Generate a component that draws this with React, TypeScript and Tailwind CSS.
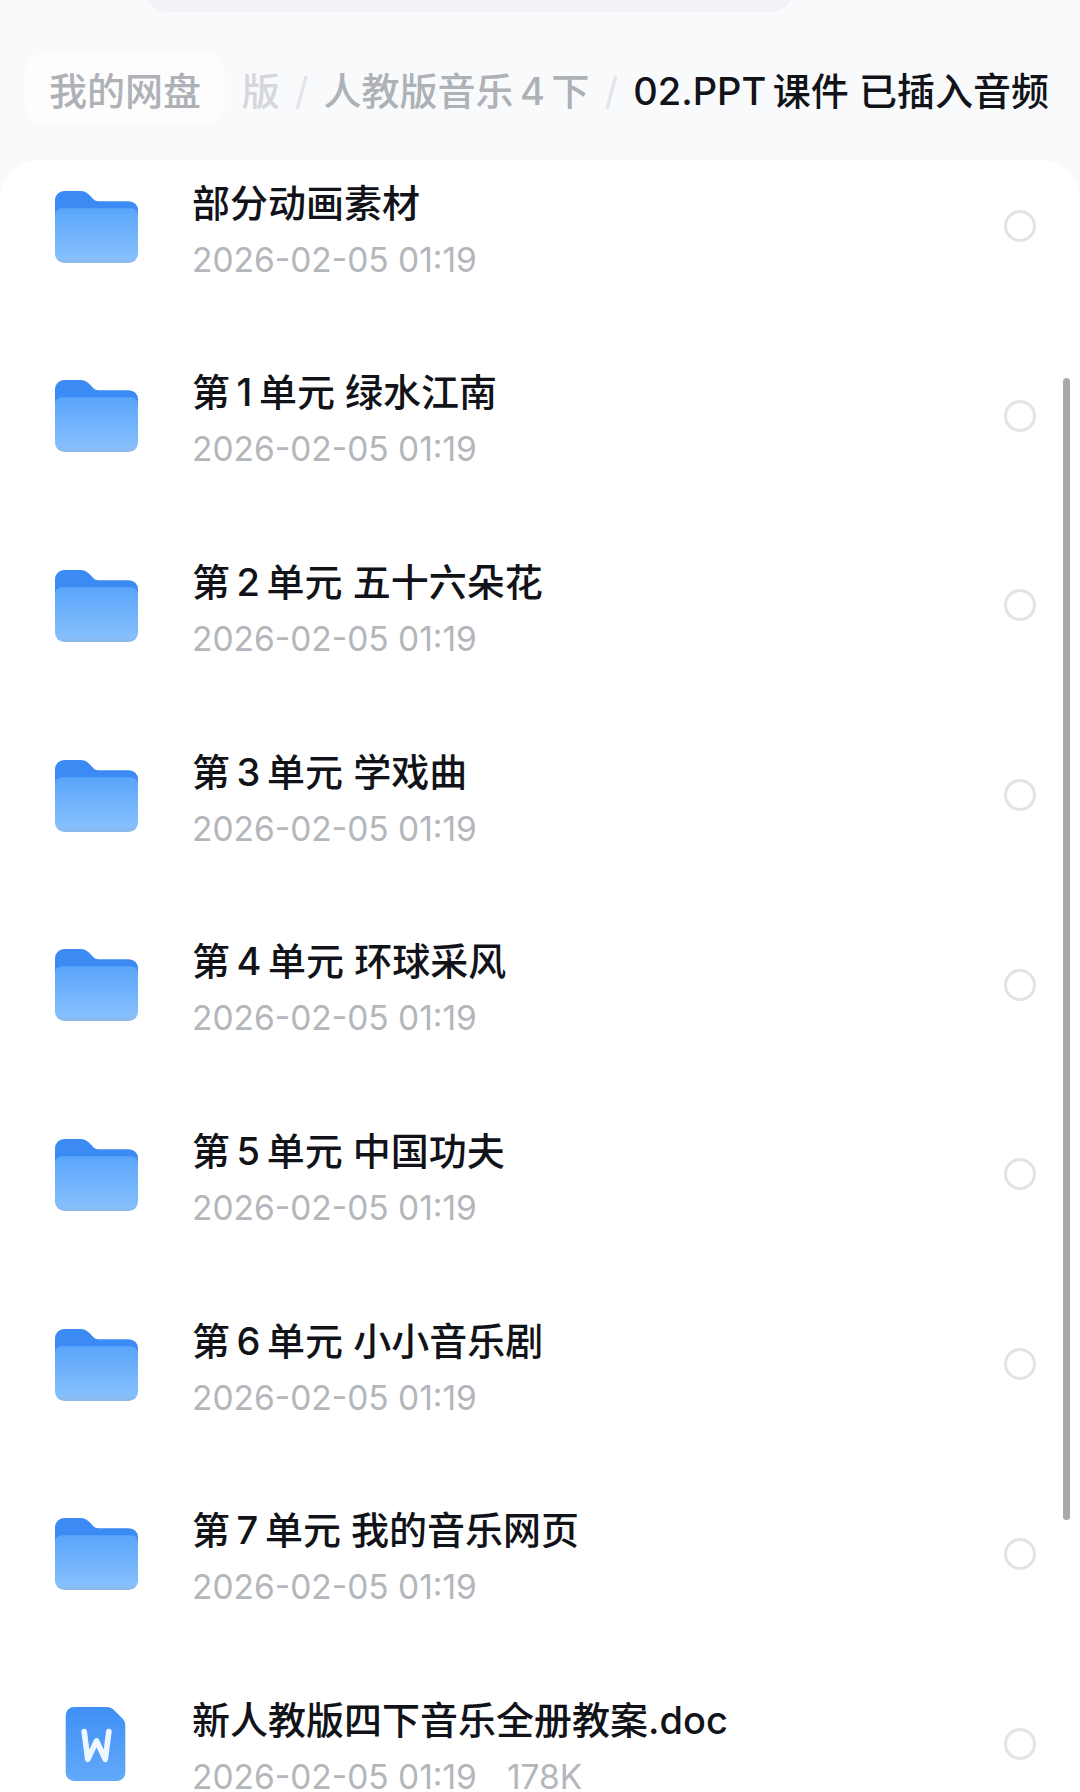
const FONT = "font-['Inter','Noto_Sans_CJK_SC',sans-serif]";

const folders = [
  '部分动画素材',
  '第\u20091\u2009单元 绿水江南',
  '第\u20092\u2009单元 五十六朵花',
  '第\u20093\u2009单元 学戏曲',
  '第\u20094\u2009单元 环球采风',
  '第\u20095\u2009单元 中国功夫',
  '第\u20096\u2009单元 小小音乐剧',
  '第\u20097\u2009单元 我的音乐网页',
];

function FolderIcon() {
  return (
    <svg width="83" height="73" viewBox="0 0 82 72" className="shrink-0">
      <defs>
        <linearGradient id="folderFront" x1="0" y1="0" x2="0" y2="1">
          <stop offset="0" stopColor="#5aa5fb" />
          <stop offset="0.9" stopColor="#85bffd" />
          <stop offset="1" stopColor="#8db9e8" />
        </linearGradient>
      </defs>
      <path
        d="M0 10a9 9 0 0 1 9-9h16c4 0 6 1 9 4l4 4c2 2 4 2 7 2h28a9 9 0 0 1 9 9v20H0z"
        fill="#3c8af4"
      />
      <path
        d="M0 25c0-4 3-7 7-7h68c4 0 7 3 7 7v38a9 9 0 0 1-9 9H9a9 9 0 0 1-9-9z"
        fill="url(#folderFront)"
      />
    </svg>
  );
}

function DocIcon() {
  return (
    <svg width="61" height="74" viewBox="0 0 58 72" className="shrink-0">
      <defs>
        <linearGradient id="docFill" x1="0" y1="0" x2="0" y2="1">
          <stop offset="0" stopColor="#3f8ff5" />
          <stop offset="1" stopColor="#62a9fa" />
        </linearGradient>
      </defs>
      <path
        d="M8 0h32c3 0 5 1 7 3l8 8c2 2 3 4 3 7v46a8 8 0 0 1-8 8H8a8 8 0 0 1-8-8V8a8 8 0 0 1 8-8z"
        fill="url(#docFill)"
      />
      <path
        d="M18 24l3.500 27 8.500-18 8.500 18 3.500-27"
        fill="none"
        stroke="#eef6ff"
        strokeWidth="5.500"
        strokeLinecap="round"
        strokeLinejoin="round"
      />
    </svg>
  );
}

function Radio() {
  return <div className="w-[32px] h-[32px] shrink-0 rounded-full border-[3px] border-[#e2e3e5]" />;
}

function Row({ icon, name, meta }: { icon: React.ReactNode; name: string; meta: React.ReactNode }) {
  return (
    <div className="h-[100px] flex items-center pl-[55px] pr-[44px]">
      <div className="w-[137px] shrink-0">{icon}</div>
      <div className="flex-1 min-w-0 translate-y-[4px]">
        <div className="text-[38px] leading-[48px] font-medium text-[#111318] whitespace-nowrap">{name}</div>
        <div className="mt-[11px] text-[33.5px] leading-[44px] text-[#b3b6bb] whitespace-nowrap">{meta}</div>
      </div>
      <Radio />
    </div>
  );
}

export default function App() {
  return (
    <div className={`relative w-[1080px] h-[1792px] overflow-hidden bg-[#f9fafc] ${FONT}`}>
      <div className="ml-[143px] -mt-[28px] w-[652px] h-[40px] rounded-b-[26px] bg-[#f1f2f5]" />

      <div className="relative h-[148px] overflow-hidden">
        <div className="mt-[43px] h-[72px] pr-[31px] flex items-center justify-end gap-[15px] whitespace-nowrap text-[38px] font-medium">
          <span className="text-[#d5d7db]">版</span>
          <span className="text-[#e3e4e7] font-normal">/</span>
          <span className="text-[#aeb1b6]">人教版音乐&#8201;4&#8201;下</span>
          <span className="text-[#e3e4e7] font-normal">/</span>
          <span className="text-[#111318]">02.PPT&#8201;课件 已插入音频</span>
        </div>
        <div className="absolute left-[25px] top-[39px] w-[200px] h-[75px] pt-[5px] rounded-[22px] bg-[#fdfdfe] flex items-center justify-center text-[38px] font-medium text-[#aeb1b6]">
          我的网盘
        </div>
      </div>

      <div className="h-[1632px] rounded-t-[40px] bg-white pt-[16px] flex flex-col gap-[89.7px]">
        {folders.map((name) => (
          <Row key={name} icon={<FolderIcon />} name={name} meta="2026-02-05 01:19" />
        ))}
        <Row
          icon={
            <div className="pl-[10px]">
              <DocIcon />
            </div>
          }
          name="新人教版四下音乐全册教案.doc"
          meta={
            <span className="flex gap-[30px]">
              <span>2026-02-05 01:19</span>
              <span>178K</span>
            </span>
          }
        />
      </div>

      <div className="absolute left-[1063px] top-[378px] w-[7px] h-[1142px] rounded-full bg-[#a9a9a9]" />
    </div>
  );
}
